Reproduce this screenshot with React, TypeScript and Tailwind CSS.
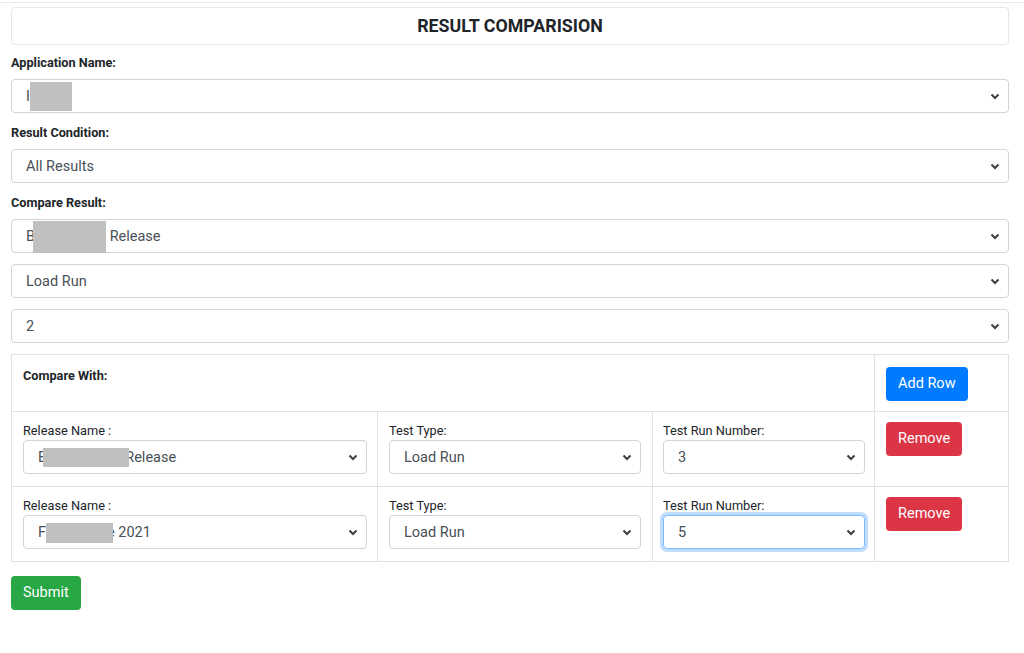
import type { ReactNode } from "react";

const Chevron = () => (
  <svg width="10" height="7" viewBox="0 0 10 7" className="shrink-0">
    <path d="M1.5 1.5l3.5 3.5 3.5-3.5" fill="none" stroke="#3c4043" strokeWidth="2" />
  </svg>
);

interface FakeSelectProps {
  children: ReactNode;
  focused?: boolean;
  className?: string;
}

const FakeSelect = ({ children, focused, className = "" }: FakeSelectProps) => (
  <div
    className={`flex h-[34px] items-center justify-between rounded-[4px] border bg-white pl-[14px] pr-[8px] text-[14.5px] text-[#495057] ${
      focused
        ? "border-[#80bdff] shadow-[0_0_0_3px_rgba(0,123,255,0.25)]"
        : "border-[#ced4da]"
    } ${className}`}
  >
    <span className="flex items-center whitespace-nowrap pt-px">{children}</span>
    <Chevron />
  </div>
);

const Redact = ({ className }: { className: string }) => (
  <span className={`relative z-10 inline-block bg-[#c0c0c0] ${className}`} />
);

const Label = ({ children }: { children: ReactNode }) => (
  <div className="mb-[7px] pt-px text-[12.7px] font-bold leading-[18px] text-[#212529]">{children}</div>
);

const CellLabel = ({ children }: { children: ReactNode }) => (
  <div className="text-[12.75px] leading-[18px] text-[#212529]">{children}</div>
);

const btn = "h-[34px] rounded-[4px] px-3 text-[14.5px] text-white";

interface CompareRow {
  release: ReactNode;
  testRun: string;
  focused?: boolean;
}

const rows: CompareRow[] = [
  {
    release: (
      <>
        E
        <Redact className="ml-[-3px] mr-[-4px] h-[19px] w-[86px]" />
        Release
      </>
    ),
    testRun: "3",
  },
  {
    release: (
      <>
        F
        <Redact className="ml-0 mr-[-6px] h-[20px] w-[67px]" />
        e 2021
      </>
    ),
    testRun: "5",
    focused: true,
  },
];

export default function App() {
  return (
    <div className="min-h-[653px] bg-white pt-[2px] font-['Roboto','Liberation_Sans',sans-serif]">
      <div className="border-t border-[#e8e8ee] pl-[11px] pr-[15px] pt-[4px]">
        <div className="mb-[8px] flex h-[38px] items-center justify-center rounded-[4px] border border-[#e3e6ea]">
          <h1 className="text-[17.8px] font-bold text-[#212529]">RESULT COMPARISION</h1>
        </div>

        <Label>Application Name:</Label>
        <FakeSelect className="mb-[10px]">
          I
          <Redact className="h-[29px] w-[42px]" />
        </FakeSelect>

        <Label>Result Condition:</Label>
        <FakeSelect className="mb-[10px]">All Results</FakeSelect>

        <Label>Compare Result:</Label>
        <FakeSelect className="mb-[11px]">
          B
          <Redact className="ml-[-2px] h-[32px] w-[73px]" />
          &nbsp;Release
        </FakeSelect>
        <FakeSelect className="mb-[11px]">Load Run</FakeSelect>
        <FakeSelect className="mb-[11px]">2</FakeSelect>

        <table className="w-full table-fixed border-collapse border border-[#dee2e6]">
          <colgroup>
            <col className="w-[366px]" />
            <col className="w-[275px]" />
            <col className="w-[222px]" />
            <col />
          </colgroup>
          <tbody>
            <tr>
              <td colSpan={3} className="border border-[#dee2e6] px-[11px] pb-[10px] pt-[12px] align-top">
                <div className="text-[12.7px] font-bold leading-[18px] text-[#212529]">Compare With:</div>
              </td>
              <td className="border border-[#dee2e6] px-[11px] pb-[10px] pt-[12px] align-top">
                <button className={`${btn} bg-[#007bff]`}>Add Row</button>
              </td>
            </tr>
            {rows.map((row, i) => (
              <tr key={i}>
                <td className="border border-[#dee2e6] pb-[12px] pl-[11px] pr-[10px] pt-[10px] align-top">
                  <CellLabel>Release Name :</CellLabel>
                  <FakeSelect>{row.release}</FakeSelect>
                </td>
                <td className="border border-[#dee2e6] pb-[12px] pl-[11px] pr-[11px] pt-[10px] align-top">
                  <CellLabel>Test Type:</CellLabel>
                  <FakeSelect>Load Run</FakeSelect>
                </td>
                <td className="border border-[#dee2e6] pb-[12px] pl-[10px] pr-[9px] pt-[10px] align-top">
                  <CellLabel>Test Run Number:</CellLabel>
                  <FakeSelect focused={row.focused}>{row.testRun}</FakeSelect>
                </td>
                <td className="border border-[#dee2e6] px-[11px] pt-[10px] align-top">
                  <button className={`${btn} bg-[#dc3545]`}>Remove</button>
                </td>
              </tr>
            ))}
          </tbody>
        </table>

        <button className={`${btn} mt-[14px] bg-[#28a745]`}>Submit</button>
      </div>
    </div>
  );
}
